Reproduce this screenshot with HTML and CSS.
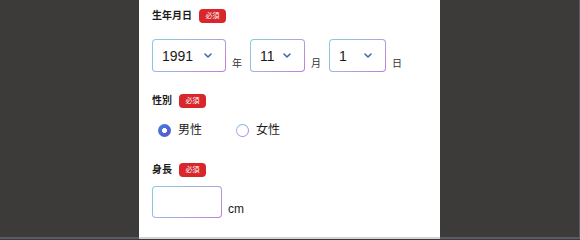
FILE: index.html
```html
<!DOCTYPE html>
<html lang="ja">
<head>
<meta charset="utf-8">
<title>プロフィール入力</title>
<link rel="stylesheet" href="styles.css">
</head>
<body>
<div class="page">
  <main class="panel">
    <section class="field">
      <div class="label-row"><span class="label">生年月日</span><span class="badge">必須</span></div>
      <div class="date-row">
        <div class="group">
          <div class="select w-year"><span class="val">1991</span><svg class="chev" viewBox="0 0 8 5" width="8" height="5"><polyline points="1,1 4,4 7,1"/></svg></div>
          <span class="unit">年</span>
        </div>
        <div class="group">
          <div class="select w-month"><span class="val">11</span><svg class="chev" viewBox="0 0 8 5" width="8" height="5"><polyline points="1,1 4,4 7,1"/></svg></div>
          <span class="unit">月</span>
        </div>
        <div class="group">
          <div class="select w-day"><span class="val">1</span><svg class="chev" viewBox="0 0 8 5" width="8" height="5"><polyline points="1,1 4,4 7,1"/></svg></div>
          <span class="unit">日</span>
        </div>
      </div>
    </section>

    <section class="field field-gender">
      <div class="label-row"><span class="label">性別</span><span class="badge">必須</span></div>
      <div class="radio-row">
        <label class="option"><span class="radio checked"></span><span class="opt-text">男性</span></label>
        <label class="option"><span class="radio"></span><span class="opt-text">女性</span></label>
      </div>
    </section>

    <section class="field field-height">
      <div class="label-row"><span class="label">身長</span><span class="badge">必須</span></div>
      <div class="input-row">
        <div class="input"></div>
        <span class="cm">cm</span>
      </div>
    </section>
  </main>
</div>
</body>
</html>
```

FILE: styles.css
```css
* { box-sizing: border-box; }
html, body { margin: 0; padding: 0; }
body {
  font-family: "Liberation Sans", "Noto Sans CJK JP", sans-serif;
  color: #1c1c1c;
  background: #3c3b39;
}
.page {
  display: flex;
  height: 239px;
  background: #3c3b39;
  border-right: 1px solid #585c66;
  box-shadow: inset 0 -2px 0 #585c66;
}
.panel {
  margin-left: 139px;
  width: 301px;
  height: 239px;
  background: #fff;
  box-shadow: inset 0 -2px 0 #d2d3d7;
  padding: 9px 0 0 13px;
}
.label-row {
  display: flex;
  align-items: center;
  height: 14px;
}
.label {
  font-size: 10px;
  font-weight: bold;
  line-height: 14px;
  color: #1c1c1c;
}
.badge {
  margin-left: 7px;
  width: 27px;
  height: 14px;
  border-radius: 4px;
  background: #d8262b;
  color: #fff;
  font-size: 7px;
  line-height: 14px;
  text-align: center;
}
.date-row {
  display: flex;
  gap: 8px;
  margin-top: 16px;
}
.group {
  display: flex;
  align-items: flex-end;
}
.select {
  display: flex;
  align-items: center;
  justify-content: space-between;
  height: 33px;
  padding: 0 13px 0 9px;
  border: 1px solid transparent;
  border-radius: 4px;
  background:
    linear-gradient(#fff, #fff) padding-box,
    linear-gradient(135deg, #84cfe0 0%, #a9a8e2 55%, #c57cd6 100%) border-box;
}
.w-year { width: 74px; }
.w-month { width: 55px; }
.w-day { width: 57px; }
.val {
  font-size: 14px;
  color: #1a1a1a;
}
.chev polyline {
  fill: none;
  stroke: #4767b2;
  stroke-width: 1.6;
  stroke-linecap: round;
  stroke-linejoin: round;
}
.unit {
  margin-left: 6px;
  margin-bottom: 3px;
  font-size: 10px;
  line-height: 10px;
  color: #333;
}
.field-gender { margin-top: 22px; }
.radio-row {
  display: flex;
  margin-top: 15px;
  height: 14px;
  align-items: center;
  padding-left: 6px;
}
.option {
  display: flex;
  align-items: center;
  width: 78px;
}
.radio {
  width: 13px;
  height: 13px;
  border-radius: 50%;
  border: 1px solid transparent;
  background:
    linear-gradient(#fff, #fff) padding-box,
    linear-gradient(135deg, #7fc7e2 0%, #a49fe0 50%, #c27bd4 100%) border-box;
}
.radio.checked {
  border: none;
  background:
    radial-gradient(circle, #fff 0 2.2px, transparent 2.7px),
    linear-gradient(135deg, #3b86e0 0%, #4f63d6 60%, #6a4fcf 100%);
}
.opt-text {
  margin-left: 7px;
  font-size: 12px;
  line-height: 14px;
  color: #1c1c1c;
}
.field-height { margin-top: 26px; }
.input-row {
  display: flex;
  align-items: flex-end;
  margin-top: 9px;
}
.input {
  width: 70px;
  height: 32px;
  border: 1px solid transparent;
  border-radius: 4px;
  background:
    linear-gradient(#fff, #fff) padding-box,
    linear-gradient(135deg, #84cfe0 0%, #a9a8e2 55%, #c57cd6 100%) border-box;
}
.cm {
  margin-left: 6px;
  margin-bottom: 3px;
  font-size: 12px;
  line-height: 12px;
  color: #1c1c1c;
}
```
